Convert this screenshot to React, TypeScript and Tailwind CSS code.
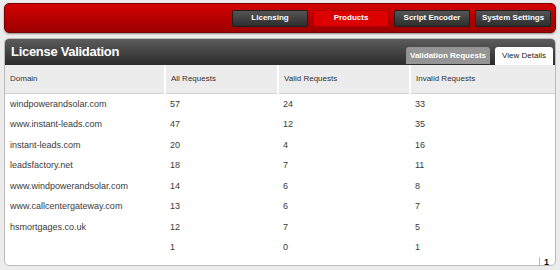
import React from "react"

const rows = [
  ["windpowerandsolar.com", "57", "24", "33"],
  ["www.instant-leads.com", "47", "12", "35"],
  ["instant-leads.com", "20", "4", "16"],
  ["leadsfactory.net", "18", "7", "11"],
  ["www.windpowerandsolar.com", "14", "6", "8"],
  ["www.callcentergateway.com", "13", "6", "7"],
  ["hsmortgages.co.uk", "12", "7", "5"],
  ["", "1", "0", "1"],
]

const navItems = ["Licensing", "Products", "Script Encoder", "System Settings"]

export default function App() {
  return (
    <div className="w-[560px] h-[270px] bg-[#ececec] pt-[3px] px-[4px] font-['Liberation_Sans',Arial,sans-serif] overflow-hidden">
      {/* top nav */}
      <div className="h-[30px] rounded-[5px] bg-gradient-to-b from-[#d40000] to-[#9c0000] border border-[#7a0000] shadow-[0_1px_2px_rgba(0,0,0,0.4)] flex items-center justify-end gap-[5px] pr-[4px]">
        {navItems.map((item) => (
          <div
            key={item}
            className={`h-[17px] w-[76px] rounded-[2px] flex items-center justify-center text-[8px] font-bold text-white ${
              item === "Products"
                ? "bg-[#dd0000] border border-[#b00000]"
                : "bg-gradient-to-b from-[#555] to-[#2e2e2e] border border-[#1e1e1e]"
            }`}
          >
            {item}
          </div>
        ))}
      </div>

      {/* panel */}
      <div className="mt-[5px] h-[228px] rounded-[5px] bg-white border border-[#bbb] overflow-hidden flex flex-col">
        <div className="h-[26px] shrink-0 bg-gradient-to-b from-[#5c5c5c] to-[#2c2c2c] flex items-end justify-between pl-[6px] pr-[2px]">
          <div className="self-center text-white font-bold text-[13px] tracking-[-0.3px]">License Validation</div>
          <div className="flex gap-[5px]">
            <div className="h-[17px] w-[84px] rounded-t-[3px] bg-[#959595] flex items-center justify-center text-[8px] font-bold text-white">
              Validation Requests
            </div>
            <div className="h-[18px] w-[58px] rounded-t-[3px] bg-white flex items-center justify-center text-[8px] text-[#222]">
              View Details
            </div>
          </div>
        </div>

        <table className="w-full border-collapse table-fixed">
          <colgroup>
            <col className="w-[160px]" />
            <col className="w-[113px]" />
            <col className="w-[132px]" />
            <col />
          </colgroup>
          <thead>
            <tr className="h-[28px] bg-[#ececec] border-b border-[#d4d4d4]">
              {["Domain", "All Requests", "Valid Requests", "Invalid Requests"].map((h, i) => (
                <th
                  key={h}
                  className={`text-left font-normal text-[8px] text-[#333] pl-[5px] ${i < 3 ? "border-r-2 border-white" : ""}`}
                >
                  {h}
                </th>
              ))}
            </tr>
          </thead>
          <tbody>
            {rows.map((r, idx) => (
              <tr key={idx} className="h-[20.5px]">
                {r.map((c, i) => (
                  <td key={i} className="text-[9px] text-[#3a3a3a] pl-[5px] pt-[2px] leading-[11px]">
                    {c}
                  </td>
                ))}
              </tr>
            ))}
          </tbody>
        </table>

        <div className="mt-auto flex justify-end pr-[6px] pb-[2px]">
          <div className="border-l border-[#bbb] pl-[4px] text-[9px] font-bold text-[#111] leading-[10px]">1</div>
        </div>
      </div>
    </div>
  )
}
